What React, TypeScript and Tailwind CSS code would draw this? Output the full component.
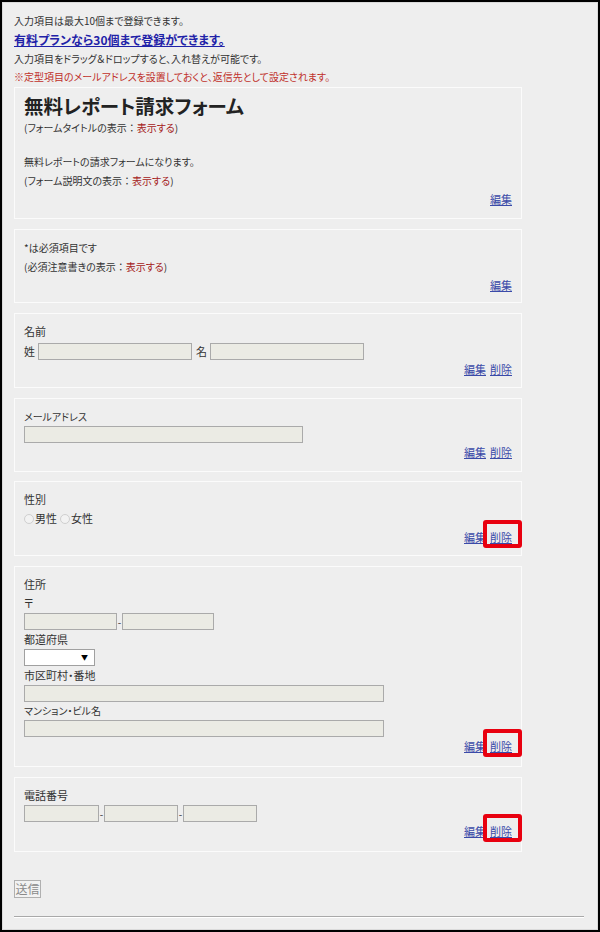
import React from "react";

const F = "font-['Noto_Sans_CJK_JP','Noto_Sans',sans-serif] [font-feature-settings:'palt']";

function Colon() {
  return <span className="[font-feature-settings:normal]">：</span>;
}

function Links({ mark = false, editOnly = false }: { mark?: boolean; editOnly?: boolean }) {
  return (
    <div className="flex justify-end gap-[4px] h-[19px] leading-[19px] text-[11px]">
      <a className="text-[#3a4aa8] underline cursor-pointer">編集</a>
      {!editOnly && (
        <span className="relative inline-block">
          <a className="text-[#3a4aa8] underline cursor-pointer">削除</a>
          {mark && (
            <span className="absolute left-[-7px] top-[-8px] w-[39px] h-[28px] border-[4px] border-[#e8000f] rounded-[3px]" />
          )}
        </span>
      )}
    </div>
  );
}

function Card({ children, className = "" }: { children: React.ReactNode; className?: string }) {
  return (
    <div className={`w-[508px] border border-[#fbfbfb] px-[9px] pt-[8px] ${className}`}>{children}</div>
  );
}

function Input({ w }: { w: string }) {
  return <span className={`block h-[17px] bg-[#ebebe4] border border-[#aaaaaa] ${w}`} />;
}

function Label({ children, small = false }: { children: React.ReactNode; small?: boolean }) {
  return <div className={`h-[19px] leading-[19px] ${small ? "text-[10px]" : "text-[11px]"}`}>{children}</div>;
}

function Radio() {
  return <span className="inline-block w-[10px] h-[10px] rounded-full border border-[#cfcfcf] bg-[#f2f2f2] mr-[1px]" />;
}

function Dash() {
  return <span className="w-[5px] text-center text-[10px] leading-none">-</span>;
}

export default function App() {
  return (
    <div className={`w-[600px] h-[932px] border-2 border-black bg-[#eeeeee] overflow-hidden text-[#333333] ${F}`}>
      <div className="h-full border border-[#dadada] pl-[11px] pt-[8px]">
        <div className="h-[19px] leading-[19px] text-[10px]">入力項目は最大10個まで登録できます。</div>
        <div className="h-[20px] leading-[20px] text-[12px] font-bold">
          <a className="text-[#1f22a8] underline cursor-pointer">有料プランなら30個まで登録ができます。</a>
        </div>
        <div className="h-[18px] leading-[18px] text-[10px]">入力項目をドラッグ＆ドロップすると、入れ替えが可能です。</div>
        <div className="h-[18px] leading-[18px] text-[10px] text-[#c0302a]">※定型項目のメールアドレスを設置しておくと、返信先として設定されます。</div>

        <div className="mt-[1px] flex flex-col">
          <Card className="pb-[9px]">
            <div className="h-[20px] leading-[20px] text-[19.5px] font-bold text-[#222222]">無料レポート請求フォーム</div>
            <div className="h-[23px] leading-[23px] text-[10px]">
              (フォームタイトルの表示<Colon /><span className="text-[#a52020]">表示する</span>)
            </div>
            <div className="h-[13px]" />
            <Label small>無料レポートの請求フォームになります。</Label>
            <Label small>
              (フォーム説明文の表示<Colon /><span className="text-[#a52020]">表示する</span>)
            </Label>
            <Links editOnly />
          </Card>

          <Card className="mt-[10px] pb-[7px]">
            <Label small>*は必須項目です</Label>
            <Label small>
              (必須注意書きの表示<Colon /><span className="text-[#a52020]">表示する</span>)
            </Label>
            <Links editOnly />
          </Card>

          <Card className="mt-[10px] pb-[8px]">
            <Label>名前</Label>
            <div className="mt-[2px] flex items-center h-[17px] text-[11px] leading-none">
              <span className="mr-[3px]">姓</span>
              <Input w="w-[154px]" />
              <span className="ml-[4px] mr-[3px]">名</span>
              <Input w="w-[154px]" />
            </div>
            <Links />
          </Card>

          <Card className="mt-[10px] pb-[9px]">
            <Label small>メールアドレス</Label>
            <div className="flex h-[17px]">
              <Input w="w-[279px]" />
            </div>
            <Links />
          </Card>

          <Card className="mt-[9px] pb-[8px]">
            <Label>性別</Label>
            <div className="h-[19px] text-[11px] leading-none flex items-center">
              <Radio />
              <span>男性</span>
              <span className="w-[3px]" />
              <Radio />
              <span>女性</span>
            </div>
            <Links mark />
          </Card>

          <Card className="mt-[10px] pb-[10px]">
            <Label>住所</Label>
            <Label>〒</Label>
            <div className="flex items-center h-[17px]">
              <Input w="w-[93px]" />
              <Dash />
              <Input w="w-[92px]" />
            </div>
            <Label>都道府県</Label>
            <div className="flex h-[17px]">
              <span className="relative block w-[71px] h-[17px] bg-white border border-[#a0a0a0]">
                <span className="absolute right-[6px] top-[0px] text-[7px] leading-[15px] text-black">▼</span>
              </span>
            </div>
            <Label>市区町村・番地</Label>
            <div className="flex h-[17px]">
              <Input w="w-[360px]" />
            </div>
            <div className="h-[18px] leading-[18px] text-[10px]">マンション・ビル名</div>
            <div className="flex h-[17px]">
              <Input w="w-[360px]" />
            </div>
            <Links mark />
          </Card>

          <Card className="mt-[10px] pb-[10px]">
            <Label>電話番号</Label>
            <div className="flex items-center h-[17px]">
              <Input w="w-[75px]" />
              <Dash />
              <Input w="w-[74px]" />
              <Dash />
              <Input w="w-[74px]" />
            </div>
            <Links mark />
          </Card>
        </div>

        <div className="mt-[28px] flex">
          <span className="inline-flex items-center justify-center w-[27px] h-[18px] bg-[#f2f2f2] border border-[#b0b0b0] text-[12px] leading-none text-[#8a8a8a]">
            送信
          </span>
        </div>

        <div className="mt-[18px] w-[570px] border-t border-t-[#a9a9a9] border-b border-b-white" />
      </div>
    </div>
  );
}
